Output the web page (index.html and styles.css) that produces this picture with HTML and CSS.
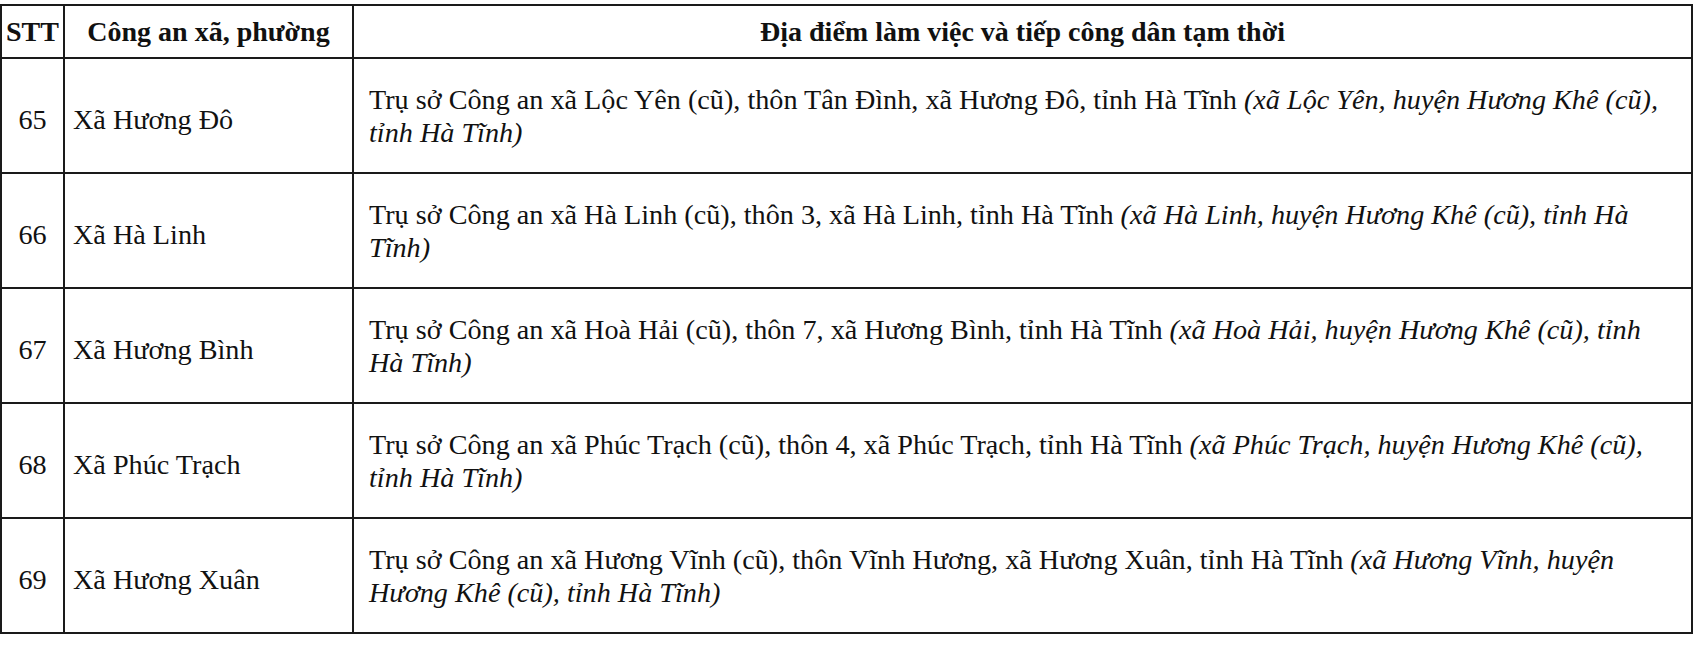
FILE: index.html
```html
<!DOCTYPE html>
<html lang="vi">
<head>
<meta charset="utf-8">
<link rel="stylesheet" href="styles.css">
</head>
<body>
<table class="tbl">
  <colgroup>
    <col class="c-stt">
    <col class="c-name">
    <col class="c-addr">
  </colgroup>
  <thead>
    <tr class="head">
      <th class="stt">STT</th>
      <th>Công an xã, phường</th>
      <th>Địa điểm làm việc và tiếp công dân tạm thời</th>
    </tr>
  </thead>
  <tbody>
    <tr>
      <td class="stt">65</td>
      <td class="name">Xã Hương Đô</td>
      <td class="addr">Trụ sở Công an xã Lộc Yên (cũ), thôn Tân Đình, xã Hương Đô, tỉnh Hà Tĩnh <i>(xã Lộc Yên, huyện Hương Khê (cũ),<br>tỉnh Hà Tĩnh)</i></td>
    </tr>
    <tr>
      <td class="stt">66</td>
      <td class="name">Xã Hà Linh</td>
      <td class="addr">Trụ sở Công an xã Hà Linh (cũ), thôn 3, xã Hà Linh, tỉnh Hà Tĩnh <i>(xã Hà Linh, huyện Hương Khê (cũ), tỉnh Hà<br>Tĩnh)</i></td>
    </tr>
    <tr>
      <td class="stt">67</td>
      <td class="name">Xã Hương Bình</td>
      <td class="addr">Trụ sở Công an xã Hoà Hải (cũ), thôn 7, xã Hương Bình, tỉnh Hà Tĩnh <i>(xã Hoà Hải, huyện Hương Khê (cũ), tỉnh<br>Hà Tĩnh)</i></td>
    </tr>
    <tr>
      <td class="stt">68</td>
      <td class="name">Xã Phúc Trạch</td>
      <td class="addr">Trụ sở Công an xã Phúc Trạch (cũ), thôn 4, xã Phúc Trạch, tỉnh Hà Tĩnh <i>(xã Phúc Trạch, huyện Hương Khê (cũ),<br>tỉnh Hà Tĩnh)</i></td>
    </tr>
    <tr>
      <td class="stt">69</td>
      <td class="name">Xã Hương Xuân</td>
      <td class="addr">Trụ sở Công an xã Hương Vĩnh (cũ), thôn Vĩnh Hương, xã Hương Xuân, tỉnh Hà Tĩnh <i>(xã Hương Vĩnh, huyện<br>Hương Khê (cũ), tỉnh Hà Tĩnh)</i></td>
    </tr>
  </tbody>
</table>
</body>
</html>
```

FILE: styles.css
```css
html, body {
  margin: 0;
  padding: 0;
  background: #ffffff;
}
body {
  padding-top: 4px;
  font-family: "Liberation Serif", "Times New Roman", serif;
  color: #111111;
}
.tbl {
  border-collapse: collapse;
  width: 1693px;
  table-layout: fixed;
  font-size: 28.2px;
  line-height: 33px;
}
.c-stt { width: 63px; }
.c-name { width: 289px; }
.tbl th, .tbl td {
  border: 2px solid #1a1a1a;
  vertical-align: middle;
}
.tbl th {
  font-weight: bold;
  font-size: 28px;
  height: 51px;
  padding: 0;
  text-align: center;
}
.tbl td {
  height: 113px;
  padding: 0;
}
.tbl td.stt,
.tbl td.name {
  height: 105px;
  padding-top: 8px;
}
.tbl th.stt, .tbl td.stt {
  text-align: center;
}
.tbl td.name {
  padding-left: 8px;
}
.tbl td.addr {
  padding: 0 4px 0 15px;
  white-space: nowrap;
}
```
